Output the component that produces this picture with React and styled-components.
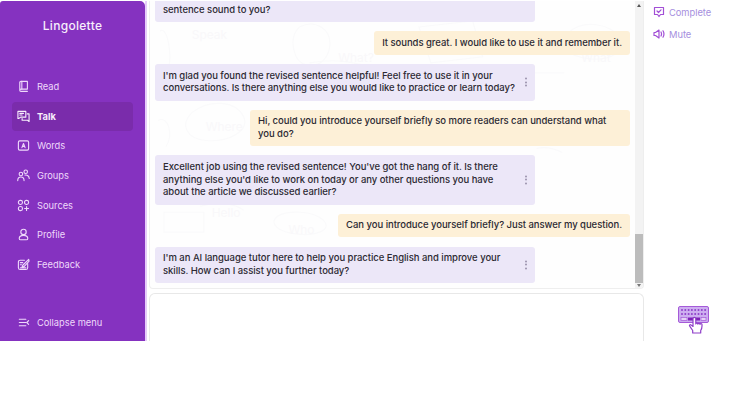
import React from 'react';
import styled, { createGlobalStyle } from 'styled-components';

const GlobalStyle = createGlobalStyle`
  html, body {
    margin: 0;
    background: #fff;
    font-family: 'Inter', 'Liberation Sans', sans-serif;
  }
`;

const Page = styled.div`
  width: 740px;
  height: 416px;
  overflow: hidden;
  background: #fff;
`;

const Shell = styled.div`
  display: flex;
  height: 341px;
  padding-top: 1px;
  box-sizing: border-box;
`;

const Sidebar = styled.aside`
  width: 145px;
  flex: none;
  display: flex;
  flex-direction: column;
  background: #8532c0;
  border-top-right-radius: 5px;
  border-top-left-radius: 3px;
  color: #efd9fb;
  padding: 0 12px;
  box-sizing: border-box;
`;

const Logo = styled.div`
  margin-top: 17px;
  text-align: center;
  font-size: 12px;
  line-height: 16px;
  font-weight: 500;
  letter-spacing: 0.3px;
  color: #f7eefc;
`;

const Nav = styled.nav`
  margin-top: 38px;
  display: flex;
  flex-direction: column;
`;

const NavItem = styled.div`
  height: 29.6px;
  display: flex;
  align-items: center;
  gap: 7px;
  padding-left: 5px;
  font-size: 9.3px;
  font-weight: ${({ $active }) => ($active ? 700 : 400)};
  color: ${({ $active }) => ($active ? '#f7eefc' : '#efd9fb')};
  background: ${({ $active }) => ($active ? '#7a2cab' : 'transparent')};
  border-radius: 4px;
  svg {
    width: 13px;
    height: 13px;
    flex: none;
    fill: none;
    stroke: currentColor;
    stroke-width: 1.2;
    stroke-linecap: round;
    stroke-linejoin: round;
  }
`;

const Collapse = styled(NavItem)`
  margin-top: auto;
  margin-bottom: 4px;
`;

const Main = styled.main`
  width: 499px;
  flex: none;
  display: flex;
  flex-direction: column;
  gap: 4px;
  padding-left: 4px;
  background: linear-gradient(to right, #e6ccfa 0, #e6ccfa 2px, #fff 2px);
  box-sizing: border-box;
`;

const ChatPanel = styled.section`
  position: relative;
  height: 288px;
  flex: none;
  display: flex;
  background: #fefefe;
  border: 1px solid #eeeeee;
  border-top: 0;
  border-radius: 0 0 4px 4px;
  overflow: hidden;
  box-sizing: border-box;
`;

const Doodles = styled.svg`
  position: absolute;
  inset: 0;
  width: 100%;
  height: 100%;
  fill: none;
  stroke: #fafafb;
  stroke-width: 1.2;
`;

const DoodleText = styled.text`
  font-family: 'Inter', sans-serif;
  font-size: 12px;
  fill: #f9f8fa;
  stroke: none;
`;

const Messages = styled.div`
  position: relative;
  flex: 1;
  min-width: 0;
  display: flex;
  flex-direction: column;
  justify-content: flex-end;
  gap: 9.2px;
  padding: 0 5px 5px 5px;
  overflow: hidden;
`;

const Bubble = styled.div`
  position: relative;
  flex: none;
  box-sizing: border-box;
  align-self: ${({ $mine }) => ($mine ? 'flex-end' : 'flex-start')};
  width: ${({ $mine }) => ($mine ? 'auto' : '380px')};
  max-width: 380px;
  padding: 5.5px ${({ $mine }) => ($mine ? '8px' : '14px')} 5.5px 8px;
  background: ${({ $mine }) => ($mine ? '#fdf0d7' : '#ece7f8')};
  border-radius: 3px;
  color: #2c2a33;
  font-size: 9.5px;
  font-weight: 500;
  letter-spacing: -0.04px;
  line-height: 12.7px;
`;

const MoreDots = styled.span`
  position: absolute;
  right: 8px;
  top: 50%;
  transform: translateY(-50%);
  display: flex;
  flex-direction: column;
  gap: 1.5px;
  i {
    width: 2px;
    height: 2px;
    border-radius: 50%;
    background: #9b93ad;
  }
`;

const Scrollbar = styled.div`
  position: relative;
  width: 8px;
  flex: none;
  background: #f3f3f3;
  display: flex;
  flex-direction: column;
  justify-content: flex-end;
  padding-bottom: 5px;
  box-sizing: border-box;
`;

const ScrollThumb = styled.div`
  height: 49px;
  background: #bcbcbc;
`;

const ScrollArrow = styled.span`
  position: absolute;
  left: 2px;
  width: 0;
  height: 0;
  border-left: 2px solid transparent;
  border-right: 2px solid transparent;
  ${({ $down }) =>
    $down
      ? 'bottom: 1px; border-top: 3px solid #777;'
      : 'top: 3px; border-bottom: 3px solid #555;'}
`;

const InputBox = styled.div`
  flex: 1;
  border: 1px solid #e8e8e8;
  border-bottom: 0;
  border-radius: 6px 6px 0 0;
  background: #fff;
`;

const Aside = styled.aside`
  flex: 1;
  display: flex;
  flex-direction: column;
  padding: 0 0 0 9px;
`;

const ActionItem = styled.div`
  height: 22px;
  display: flex;
  align-items: center;
  gap: 4px;
  font-size: 9.3px;
  color: #a58ede;
  svg {
    width: 12px;
    height: 12px;
    fill: none;
    stroke: #a24fd6;
    stroke-width: 1.2;
    stroke-linecap: round;
    stroke-linejoin: round;
  }
`;

const KeyboardButton = styled.div`
  margin: auto 0 5px 25px;
  width: 32px;
  height: 30px;
  svg {
    display: block;
    width: 32px;
    height: 30px;
  }
`;

const icons = {
  read: (
    <svg viewBox="0 0 14 14">
      <path d="M3 11V2.600C3 1.900 3.500 1.500 4.200 1.500h7v8.300H4.200C3.500 9.800 3 10.300 3 11c0 .7.500 1.200 1.200 1.200h7" />
      <path d="M5.200 1.500v8.300" />
    </svg>
  ),
  talk: (
    <svg viewBox="0 0 14 14">
      <path d="M1 1.500h8.500v6.200H4L1.800 9.200H1z" />
      <path d="M3 3.600h4M3 5.400h2.500" />
      <path d="M11 4.200h2v8.200l-1.600-1.400H5.500V9.200" />
    </svg>
  ),
  words: (
    <svg viewBox="0 0 14 14">
      <rect x="1.500" y="2" width="11" height="10" rx="1.400" />
      <path d="M5.300 9.300 7 4.800l1.700 4.500M5.900 7.900h2.200" />
    </svg>
  ),
  groups: (
    <svg viewBox="0 0 14 14">
      <circle cx="4.200" cy="5.400" r="1.900" />
      <circle cx="9.400" cy="3" r="1.900" />
      <path d="M.8 12.500c0-2.400 1.400-3.900 3.400-3.900s3.400 1.500 3.400 3.900M8.600 6.600c2.400-.4 4.400 1 4.600 3.600" />
    </svg>
  ),
  sources: (
    <svg viewBox="0 0 14 14">
      <rect x="1.500" y="1.500" width="4.400" height="4.400" rx="2" />
      <rect x="8.100" y="1.500" width="4.400" height="4.400" rx="2" />
      <rect x="1.500" y="8.100" width="4.400" height="4.400" rx="2" />
      <path d="M10.300 8.200v4.200M8.200 10.300h4.200" />
    </svg>
  ),
  profile: (
    <svg viewBox="0 0 14 14">
      <circle cx="7" cy="4.200" r="2.900" />
      <path d="M2.400 11.200c0-2 1.600-3.300 4.600-3.300s4.600 1.300 4.600 3.300c0 1-.6 1.500-1.600 1.500H4c-1 0-1.600-.5-1.600-1.500z" />
    </svg>
  ),
  feedback: (
    <svg viewBox="0 0 14 14">
      <path d="M8 2.400H3.500c-1.200 0-2 .8-2 2v6c0 1.200.8 2 2 2h6c1.200 0 2-.8 2-2V6" />
      <path d="M12.600 1.400 6.200 7.800 5.400 10l2.200-.8L13 3.400zM3.600 5h2.600M3.600 7.200h1.200M3.600 10.600h6" />
    </svg>
  ),
  collapse: (
    <svg viewBox="0 0 14 14">
      <path d="M2.500 3.500h7M2.500 7h7M2.500 10.500h7M12.500 5 10.600 7l1.900 2" />
    </svg>
  ),
};

const navLinks = [
  { key: 'read', label: 'Read' },
  { key: 'talk', label: 'Talk', active: true },
  { key: 'words', label: 'Words' },
  { key: 'groups', label: 'Groups' },
  { key: 'sources', label: 'Sources' },
  { key: 'profile', label: 'Profile' },
  { key: 'feedback', label: 'Feedback' },
];

const messages = [
  { text: 'sentence sound to you?' },
  { text: 'It sounds great. I would like to use it and remember it.', mine: true },
  {
    text: "I'm glad you found the revised sentence helpful! Feel free to use it in your conversations. Is there anything else you would like to practice or learn today?",
  },
  {
    text: 'Hi, could you introduce yourself briefly so more readers can understand what you do?',
    mine: true,
  },
  {
    text: "Excellent job using the revised sentence! You've got the hang of it. Is there anything else you'd like to work on today or any other questions you have about the article we discussed earlier?",
  },
  { text: 'Can you introduce yourself briefly? Just answer my question.', mine: true },
  {
    text: "I'm an AI language tutor here to help you practice English and improve your skills. How can I assist you further today?",
  },
];

const KeyboardIcon = () => (
  <svg viewBox="0 0 32 30">
    <rect x="0.500" y="0.500" width="30" height="16" rx="1.500" fill="#cdaef0" stroke="#a55ad8" />
    {[0, 1, 2, 3, 4, 5, 6, 7].map((i) => (
      <g key={i} fill="#8f3fc9">
        <rect x={3 + i * 3.3} y="3" width="2" height="2" rx="1" />
        <rect x={3 + i * 3.3} y="7" width="2" height="2" rx="1" />
      </g>
    ))}
    <rect x="3" y="11.500" width="6" height="3" fill="#e5d3f7" stroke="#a55ad8" strokeWidth="0.7" />
    <rect x="10" y="11.500" width="12" height="3" fill="#7f22b8" />
    <rect x="23" y="11.500" width="5" height="3" fill="#e5d3f7" stroke="#a55ad8" strokeWidth="0.7" />
    <path
      d="M15 12.500v8l-2-1.600c-1-.6-2 .4-1.300 1.300l3 4.300v2.500h8v-2.500c1-1.500 1.300-2.500 1.300-4.500v-1.500c0-1.200-1.800-1.400-2-.2 0-1.200-2-1.400-2.200-.2 0-1.100-1.800-1.200-2-.2v-5.500c0-1.300-2.800-1.300-2.800.100z"
      fill="#fff"
      stroke="#8f3fc9"
      strokeWidth="1.200"
      strokeLinejoin="round"
    />
  </svg>
);

const App = () => (
  <Page>
    <GlobalStyle />
    <Shell>
      <Sidebar>
        <Logo>Lingolette</Logo>
        <Nav>
          {navLinks.map(({ key, label, active }) => (
            <NavItem key={key} $active={active}>
              {icons[key]}
              {label}
            </NavItem>
          ))}
        </Nav>
        <Collapse>
          {icons.collapse}
          Collapse menu
        </Collapse>
      </Sidebar>
      <Main>
        <ChatPanel>
          <Doodles viewBox="0 0 495 288">
            <path d="M10 30c8-6 14 30 6 44M150 26c16-8 34 2 30 22s-28 22-34 6 0-24 4-28zM270 26l54-6 10 36-52 6zM282 34l32-3M284 44l32-3" />
            <path d="M420 32c14-14 44-10 52 6 4 14-10 22-30 20-22-2-32-12-22-26z" />
            <path d="M8 120c10-6 16 14 8 26M42 112c18-14 44-12 52 4 6 14-14 26-38 24-20-2-26-16-14-28z" />
            <path d="M128 216c10-6 36-6 46 4s-8 16-26 14-30-10-20-18zM14 212h40v20H14zM50 206c14-4 34-4 44 4" />
            <path d="M160 62c24-4 40-2 60 4M386 72h30M388 148c8-2 18 0 26 4" />
          </Doodles>
          <Doodles viewBox="0 0 495 288">
            <DoodleText x="42" y="38">Speak</DoodleText>
            <DoodleText x="56" y="130">Where</DoodleText>
            <DoodleText x="189" y="61">What?</DoodleText>
            <DoodleText x="433" y="61">What</DoodleText>
            <DoodleText x="62" y="217">Hello</DoodleText>
            <DoodleText x="139" y="234">Who</DoodleText>
          </Doodles>
          <Messages>
            {messages.map(({ text, mine }) => (
              <Bubble key={text} $mine={mine}>
                {text}
                {!mine && text.length > 30 && (
                  <MoreDots>
                    <i />
                    <i />
                    <i />
                  </MoreDots>
                )}
              </Bubble>
            ))}
          </Messages>
          <Scrollbar>
            <ScrollArrow />
            <ScrollThumb />
            <ScrollArrow $down />
          </Scrollbar>
        </ChatPanel>
        <InputBox />
      </Main>
      <Aside>
        <ActionItem>
          <svg viewBox="0 0 12 12">
            <path d="M1.500 1.500h9v7H7.500L6 10.500 4.500 8.500h-3z" />
            <path d="M4 5l1.500 1.500L8 3.800" />
          </svg>
          Complete
        </ActionItem>
        <ActionItem>
          <svg viewBox="0 0 12 12">
            <path d="M1 4.500v3h1.500L6 10V2L2.500 4.500z" />
            <path d="M8 4c.7 1.300.7 2.700 0 4M10 2.800c1.200 2 1.200 4.400 0 6.400" />
          </svg>
          Mute
        </ActionItem>
        <KeyboardButton>
          <KeyboardIcon />
        </KeyboardButton>
      </Aside>
    </Shell>
  </Page>
);

export default App;
